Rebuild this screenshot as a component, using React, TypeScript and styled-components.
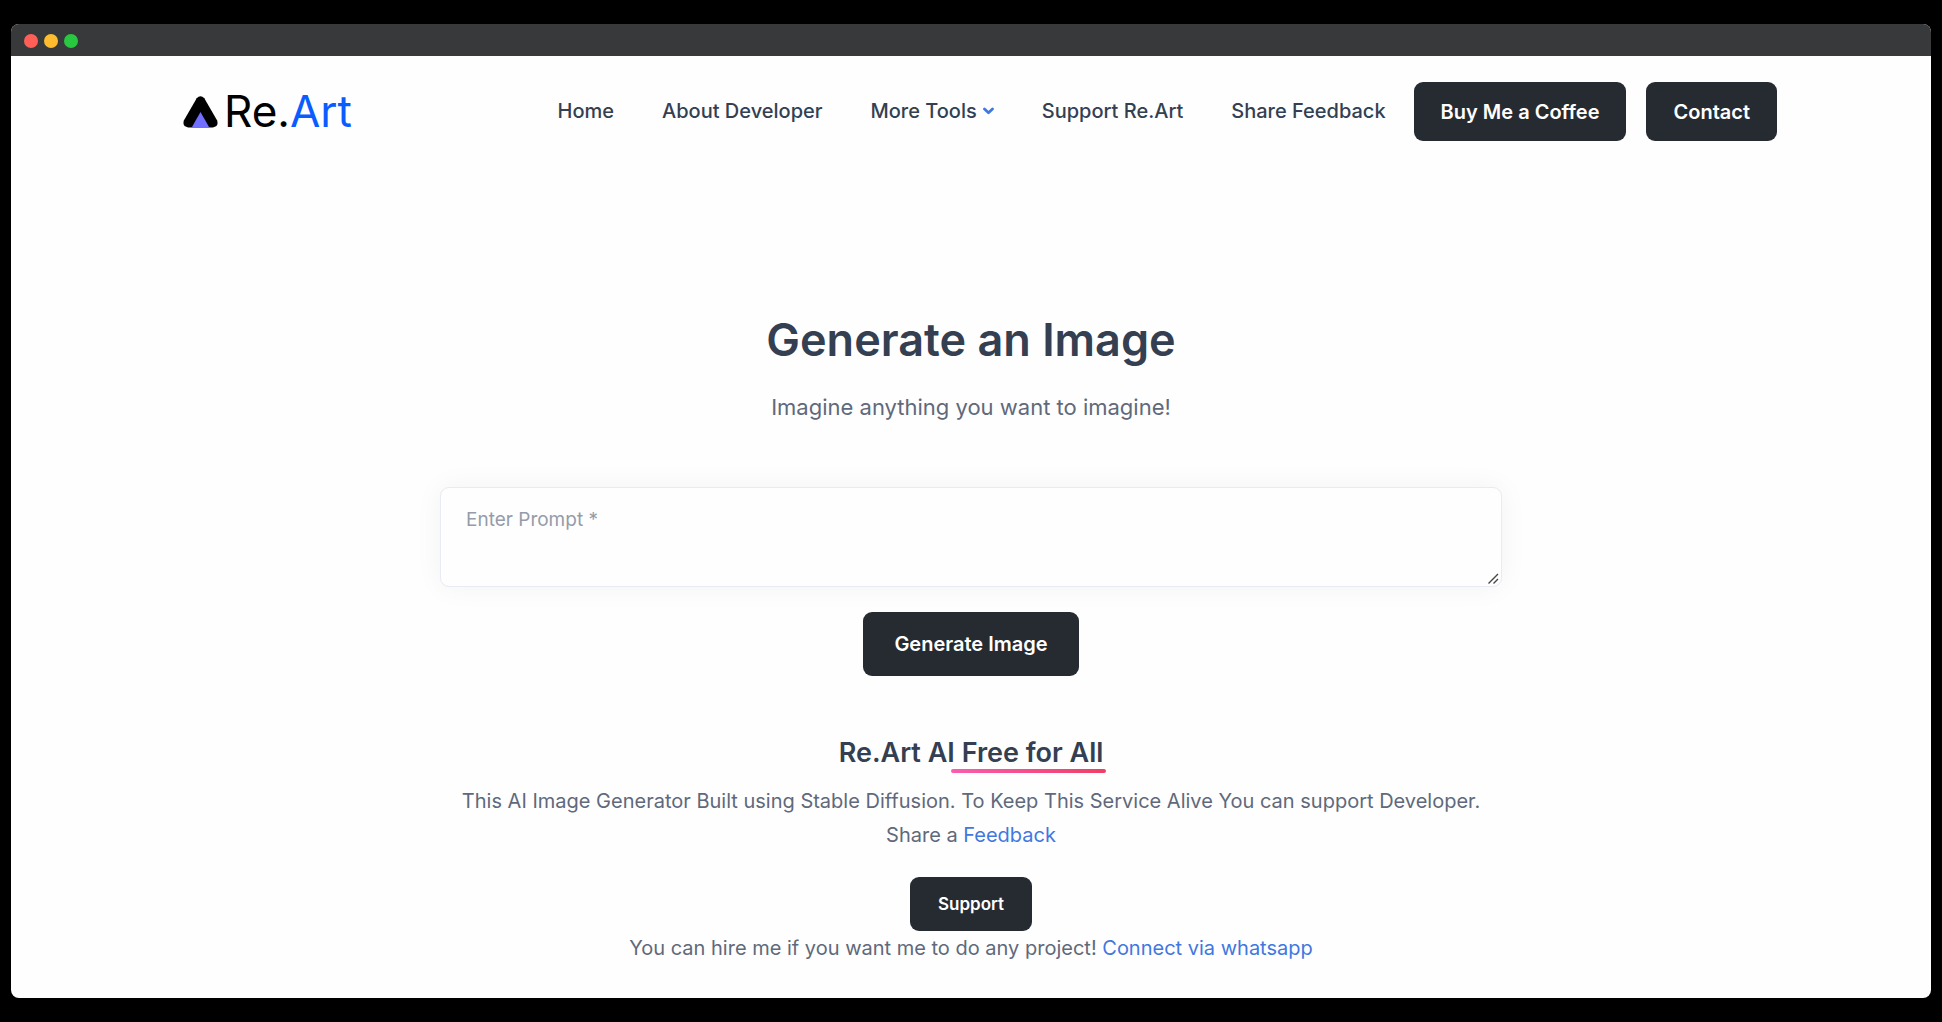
import React from "react";
import styled, { createGlobalStyle } from "styled-components";

const color = {
  heading: "#343f52",
  body: "#60697b",
  link: "#3f78e0",
  dark: "#262b32",
  page: "#fefefe",
};

const resizeGrip = encodeURIComponent(
  '<svg xmlns="http://www.w3.org/2000/svg" width="15" height="15"><path d="M2.5 12.5L12 3M7.5 12.5L12 8" stroke="#444" stroke-width="1.4" fill="none"/></svg>'
);

const GlobalStyle = createGlobalStyle`
  *, *::before, *::after { box-sizing: border-box; }
  body {
    margin: 0;
    background: #000;
    color: ${color.body};
    font-family: Inter, "Liberation Sans", sans-serif;
    font-size: 20px;
    font-weight: 400;
    line-height: 34px;
  }
`;

const Desktop = styled.div`
  padding: 24px 11px;
`;

const Window = styled.div`
  overflow: hidden;
  border-radius: 8px;
  background: ${color.page};
`;

const TitleBar = styled.div`
  display: flex;
  gap: 6px;
  padding: 10px 13px 8px;
  background: #38393a;
`;

const Dot = styled.span<{ $fill: string }>`
  width: 14px;
  height: 14px;
  border-radius: 50%;
  background: ${(p) => p.$fill};
`;

const Header = styled.header`
  display: flex;
  flex-wrap: wrap;
  align-items: center;
  justify-content: space-between;
  max-width: 1612px;
  margin: 0 auto;
  padding: 26px 0;
`;

const Logo = styled.a`
  display: flex;
  align-items: center;
  gap: 6px;
  padding-left: 18px;
  color: #000;
  font-size: 44px;
  line-height: 56px;
  text-decoration: none;
`;

const LogoName = styled.span`
  padding-bottom: 2px;
`;

const LogoAccent = styled.span`
  color: #0a5cff;
`;

const Menu = styled.div`
  display: flex;
  flex-wrap: wrap;
  align-items: center;
  gap: 28px;
`;

const Nav = styled.nav`
  display: flex;
  flex-wrap: wrap;
  gap: 48px;
  padding-bottom: 2px;
`;

const NavLink = styled.a`
  color: ${color.heading};
  font-weight: 500;
  text-decoration: none;
`;

const NavToggle = styled.button`
  display: flex;
  align-items: center;
  gap: 6px;
  padding: 0;
  border: 0;
  background: none;
  color: ${color.heading};
  font: inherit;
  font-weight: 500;
  cursor: pointer;
`;

const Actions = styled.div`
  display: flex;
  gap: 20px;
`;

const sizes = {
  small: "padding: 10px 28px; font-size: 17px;",
  medium: "padding: 13px 27px 12px; font-size: 20px;",
  large: "padding: 15px 31px; font-size: 20px;",
};

const Button = styled.button<{ $size: keyof typeof sizes }>`
  ${(p) => sizes[p.$size]}
  border: 0;
  border-radius: 9px;
  background: ${color.dark};
  color: #fff;
  font-family: inherit;
  font-weight: 600;
  line-height: 34px;
  cursor: pointer;
`;

const Main = styled.main`
  display: flex;
  flex-direction: column;
  align-items: center;
  max-width: 1062px;
  margin: 0 auto;
  padding: 144px 0 33px;
  text-align: center;
`;

const Title = styled.h1`
  margin: 0 0 18px;
  color: ${color.heading};
  font-size: 45px;
  font-weight: 600;
  line-height: 58px;
`;

const Lead = styled.p`
  margin: 0 0 60px;
  font-size: 22px;
  line-height: 40px;
`;

const PromptForm = styled.form`
  display: flex;
  flex-direction: column;
  align-items: center;
  gap: 25px;
  width: 100%;
  margin-bottom: 57px;
`;

const Prompt = styled.textarea`
  display: block;
  width: 100%;
  height: 100px;
  padding: 18px 25px;
  border: 1px solid #e8ebf3;
  border-radius: 9px;
  outline: 0;
  background: ${color.page};
  box-shadow: 0 0 28px rgba(30, 34, 40, 0.05);
  color: ${color.body};
  font-family: inherit;
  font-size: 19px;
  line-height: 28px;
  resize: vertical;

  &::placeholder {
    color: #959ca9;
    opacity: 1;
  }

  &::-webkit-resizer {
    background: url("data:image/svg+xml,${resizeGrip}") no-repeat right bottom;
  }
`;

const Subtitle = styled.h2`
  margin: 0 0 11px;
  color: ${color.heading};
  font-size: 27px;
  font-weight: 600;
  line-height: 40px;
`;

const Underlined = styled.span`
  position: relative;

  &::after {
    content: "";
    position: absolute;
    right: -3px;
    bottom: -4px;
    left: -11px;
    height: 4px;
    border-radius: 2px;
    background: linear-gradient(90deg, #fb5caf, #ef3e66);
  }
`;

const Text = styled.p<{ $spaced?: boolean }>`
  margin: 0 0 ${(p) => (p.$spaced ? "25px" : "0")};
`;

const TextLink = styled.a`
  color: ${color.link};
  text-decoration: none;
`;

const LogoMark = () => (
  <svg width="35" height="32" viewBox="0 0 35 32" aria-hidden="true">
    <path
      d="M13.7 2.2Q17.5-1.9 21.3 2.2L34 24.2Q36.2 30.6 29.8 31.5H5.2Q-1.2 30.6 1 24.2Z"
      fill="#000"
    />
    <path d="M17.5 16L26.3 31.5H8.7Z" fill="#716fff" />
  </svg>
);

const Chevron = () => (
  <svg width="11" height="8" viewBox="0 0 11 8" aria-hidden="true">
    <path
      d="M1.5 2L5.5 5.7L9.5 2"
      fill="none"
      stroke={color.link}
      strokeWidth="2.8"
      strokeLinecap="round"
      strokeLinejoin="round"
    />
  </svg>
);

export default function App() {
  return (
    <>
      <GlobalStyle />
      <Desktop>
        <Window>
          <TitleBar>
            <Dot $fill="#ff5f57" />
            <Dot $fill="#febc2e" />
            <Dot $fill="#28c840" />
          </TitleBar>
          <Header>
            <Logo href="#">
              <LogoMark />
              <LogoName>
                Re.<LogoAccent>Art</LogoAccent>
              </LogoName>
            </Logo>
            <Menu>
              <Nav>
                <NavLink href="#">Home</NavLink>
                <NavLink href="#about">About Developer</NavLink>
                <NavToggle type="button" aria-haspopup="true">
                  More Tools
                  <Chevron />
                </NavToggle>
                <NavLink href="#support">Support Re.Art</NavLink>
                <NavLink href="#feedback">Share Feedback</NavLink>
              </Nav>
              <Actions>
                <Button type="button" $size="medium">Buy Me a Coffee</Button>
                <Button type="button" $size="medium">Contact</Button>
              </Actions>
            </Menu>
          </Header>
          <Main>
            <Title>Generate an Image</Title>
            <Lead>Imagine anything you want to imagine!</Lead>
            <PromptForm onSubmit={(e) => e.preventDefault()}>
              <Prompt aria-label="Enter Prompt" placeholder="Enter Prompt *" required />
              <Button type="submit" $size="large">Generate Image</Button>
            </PromptForm>
            <Subtitle>
              Re.Art AI <Underlined>Free for All</Underlined>
            </Subtitle>
            <Text $spaced>
              This AI Image Generator Built using Stable Diffusion. To Keep This Service Alive You
              can support Developer.
              <br />
              Share a <TextLink href="#feedback">Feedback</TextLink>
            </Text>
            <Button type="button" $size="small">Support</Button>
            <Text>
              You can hire me if you want me to do any project!{" "}
              <TextLink href="#whatsapp">Connect via whatsapp</TextLink>
            </Text>
          </Main>
        </Window>
      </Desktop>
    </>
  );
}
